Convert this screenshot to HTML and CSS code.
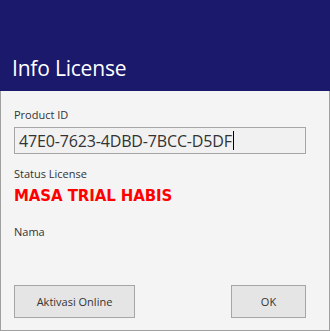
FILE: index.html
```html
<!DOCTYPE html>
<html>
<head>
<meta charset="utf-8">
<link rel="stylesheet" href="styles.css">
</head>
<body>
<div class="dialog">
  <header class="titlebar"><h1 class="title">Info License</h1></header>
  <main class="content">
    <div class="field">
      <label class="label">Product ID</label>
      <div class="input"><span class="input-text">47E0-7623-4DBD-7BCC-D5DF</span><span class="caret"></span></div>
    </div>
    <div class="field status">
      <label class="label">Status License</label>
      <div class="status-value">MASA TRIAL HABIS</div>
    </div>
    <div class="field nama">
      <label class="label">Nama</label>
    </div>
    <div class="actions">
      <button class="btn btn-wide">Aktivasi Online</button>
      <button class="btn btn-ok">OK</button>
    </div>
  </main>
</div>
</body>
</html>
```
FILE: styles.css
```css
html, body { margin: 0; padding: 0; }
body { width: 330px; height: 331px; font-family: "Open Sans", "Noto Sans", sans-serif; background: #f4f4f4; }
.dialog { width: 330px; height: 331px; display: flex; flex-direction: column; box-sizing: border-box; }
.titlebar { height: 91px; background: #1a196b; display: flex; align-items: flex-end; padding: 0 0 9px 12px; box-sizing: border-box; }
.title { margin: 0; color: #ffffff; font-weight: normal; font-size: 21px; line-height: 28px; letter-spacing: -0.2px; }
.content { flex: 1; background: #f4f4f4; border: 1px solid #a0a0a0; border-top: none; padding: 17px 23px 12px 13px; display: flex; flex-direction: column; }
.label { display: block; font-size: 11px; color: #333; line-height: 14px; }
.input { margin-top: 5px; height: 27px; box-sizing: border-box; border: 1px solid #a6a6a6; background: #f1f1f1; display: flex; align-items: center; padding-left: 4px; }
.input-text { font-size: 16px; color: #333; letter-spacing: -0.15px; }
.caret { width: 1px; height: 19px; background: #000; margin-left: 1px; }
.status { margin-top: 13px; }
.status-value { margin-top: 6px; font-family: "DejaVu Sans", sans-serif; font-weight: bold; font-size: 15px; color: #ff0000; line-height: 18px; letter-spacing: -0.1px; }
.nama { margin-top: 20px; }
.actions { margin-top: auto; display: flex; justify-content: space-between; }
.btn { height: 33px; box-sizing: border-box; border: 1px solid #a6a6a6; background: #e5e5e5; font-family: inherit; font-size: 11px; color: #333; padding: 0; }
.btn-wide { width: 121px; }
.btn-ok { width: 75px; }
```
